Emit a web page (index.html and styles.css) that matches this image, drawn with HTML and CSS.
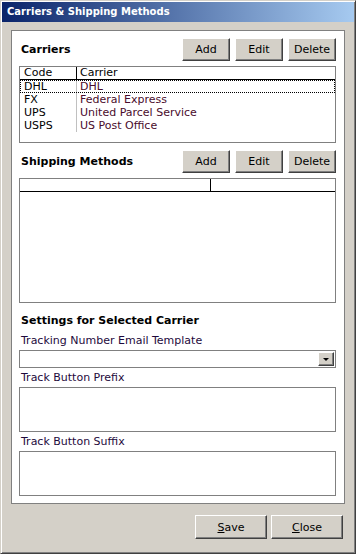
FILE: index.html
```html
<!DOCTYPE html>
<html lang="en">
<head>
    <meta charset="UTF-8">
    <title>Carriers &amp; Shipping Methods</title>
    <link rel="stylesheet" href="styles.css">
</head>
<body>
    <div class="window">
        <div class="titlebar">Carriers &amp; Shipping Methods</div>

        <div class="panel">
            <div class="section-head">
                <span class="section-title">Carriers</span>
                <div class="btns">
                    <button class="btn">Add</button>
                    <button class="btn">Edit</button>
                    <button class="btn">Delete</button>
                </div>
            </div>
            <div class="list carriers">
                <div class="row head">
                    <span class="c1">Code</span>
                    <span class="c2">Carrier</span>
                </div>
                <div class="row sel">
                    <span class="c1">DHL</span>
                    <span class="c2">DHL</span>
                </div>
                <div class="row">
                    <span class="c1">FX</span>
                    <span class="c2">Federal Express</span>
                </div>
                <div class="row">
                    <span class="c1">UPS</span>
                    <span class="c2">United Parcel Service</span>
                </div>
                <div class="row">
                    <span class="c1">USPS</span>
                    <span class="c2">US Post Office</span>
                </div>
            </div>

            <div class="section-head second">
                <span class="section-title">Shipping Methods</span>
                <div class="btns">
                    <button class="btn">Add</button>
                    <button class="btn">Edit</button>
                    <button class="btn">Delete</button>
                </div>
            </div>
            <div class="list methods">
                <div class="row head">
                    <span class="c1"></span>
                    <span class="c2"></span>
                </div>
            </div>

            <div class="settings-title">Settings for Selected Carrier</div>
            <div class="field-label first">Tracking Number Email Template</div>
            <div class="combo">
                <div class="combo-text"></div>
                <div class="combo-btn"><span class="arrow"></span></div>
            </div>
            <div class="field-label">Track Button Prefix</div>
            <div class="textbox"></div>
            <div class="field-label">Track Button Suffix</div>
            <div class="textbox"></div>
        </div>

        <div class="footer">
            <button class="btn big"><u>S</u>ave</button>
            <button class="btn big"><u>C</u>lose</button>
        </div>
    </div>
</body>
</html>
```

FILE: styles.css
```css
* {
    margin: 0;
    padding: 0;
    box-sizing: border-box;
}

body {
    font-family: "DejaVu Sans", Tahoma, sans-serif;
    font-size: 11px;
    background: #d4d0c8;
}

.window {
    width: 356px;
    height: 554px;
    background: #d4d0c8;
    border: 1px solid;
    border-color: #d4d0c8 #404040 #404040 #d4d0c8;
    box-shadow: inset 1px 1px #fff, inset -1px -1px #808080;
    padding: 1px;
    display: flex;
    flex-direction: column;
}

.titlebar {
    flex-shrink: 0;
    height: 20px;
    line-height: 20px;
    padding-left: 5px;
    color: #fff;
    font-weight: bold;
    font-size: 10px;
    background: linear-gradient(to right, #0a246a, #a6caf0);
}

.panel {
    flex-shrink: 0;
    margin: 8px 9px 0 9px;
    background: #fff;
    border: 1px solid #808080;
    padding: 7px 8px 7px 7px;
    display: flex;
    flex-direction: column;
}

.section-head {
    flex-shrink: 0;
    display: flex;
    align-items: center;
    justify-content: space-between;
    height: 23px;
}

.section-head.second {
    margin-top: 7px;
}

.section-title {
    font-weight: bold;
    padding-left: 2px;
    color: #000;
}

.btns {
    display: flex;
    gap: 5px;
}

.btn {
    font-family: "DejaVu Sans", Tahoma, sans-serif;
    font-size: 11px;
    color: #000;
    width: 48px;
    height: 23px;
    background: #d4d0c8;
    border: 1px solid;
    border-color: #fff #404040 #404040 #fff;
    box-shadow: inset -1px -1px #808080;
}

.btn.big {
    width: 72px;
    height: 24px;
}

.btn u {
    text-decoration: underline;
}

.list {
    flex-shrink: 0;
    margin-top: 5px;
    border: 1px solid #808080;
    background: #fff;
}

.carriers {
    height: 77px;
}

.methods {
    height: 125px;
}

.row {
    display: grid;
    grid-template-columns: 57px 1fr;
    height: 13px;
    line-height: 13px;
}

.row.head {
    border-bottom: 1px solid #000;
    height: 13px;
    line-height: 12px;
}

.methods .row {
    grid-template-columns: 191px 1fr;
}

.row span {
    white-space: nowrap;
    overflow: hidden;
}

.c1 {
    padding-left: 4px;
    color: #000;
    border-right: 1px solid #c0c0c0;
}

.c2 {
    padding-left: 3px;
    color: #4a0c2c;
}

.row.head .c1 {
    border-right-color: #000;
}

.row.head .c2 {
    color: #000;
}

.row.sel {
    outline: 1px dotted #000;
    outline-offset: -1px;
}

.settings-title {
    flex-shrink: 0;
    margin-top: 11px;
    font-weight: bold;
    padding-left: 2px;
    height: 14px;
    line-height: 14px;
    color: #000;
}

.field-label {
    flex-shrink: 0;
    margin-top: 3px;
    padding-left: 2px;
    height: 14px;
    line-height: 14px;
    color: #1e0a3c;
}

.field-label.first {
    margin-top: 6px;
}

.combo {
    flex-shrink: 0;
    margin-top: 2px;
    height: 18px;
    border: 1px solid #808080;
    display: flex;
    padding: 1px;
}

.combo-text {
    flex-grow: 1;
}

.combo-btn {
    width: 16px;
    background: #d4d0c8;
    border: 1px solid;
    border-color: #fff #404040 #404040 #fff;
    box-shadow: inset -1px -1px #808080;
    display: flex;
    align-items: center;
    justify-content: center;
}

.arrow {
    width: 0;
    height: 0;
    border-left: 3px solid transparent;
    border-right: 3px solid transparent;
    border-top: 3px solid #000;
}

.textbox {
    flex-shrink: 0;
    margin-top: 2px;
    height: 45px;
    border: 1px solid #808080;
}

.footer {
    display: flex;
    justify-content: flex-end;
    gap: 4px;
    margin-top: 11px;
    padding-right: 11px;
}
```
